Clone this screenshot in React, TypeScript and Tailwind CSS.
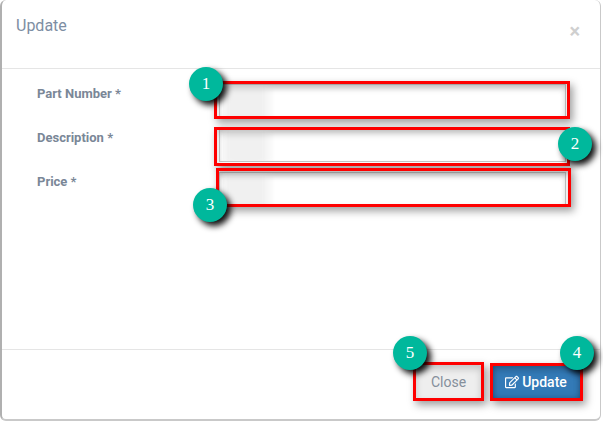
import React from "react"
import { FaRegEdit } from "react-icons/fa"

const redBox = "absolute border-[3px] border-[#fe0000] shadow-[3px_4px_8px_rgba(0,0,0,0.38),inset_0_4px_7px_rgba(0,0,0,0.18)] pointer-events-none"
const badge = "absolute flex h-[34px] w-[34px] items-center justify-center rounded-full bg-[#00b89c] text-[17px] text-white shadow-[4px_4px_6px_rgba(0,0,0,0.95)] font-['Liberation_Serif',serif]"

function Field({ label }: { label: string }) {
  return (
    <div className="flex h-[34px]">
      <label className="w-[203px] pl-[21px] pt-[2px] text-[13px] font-bold leading-[16px] text-[#7a8797]">{label}</label>
      <div className="relative h-[34px] w-[347px] overflow-hidden border border-[#c4c4c4] bg-white shadow-[inset_0_3px_5px_rgba(0,0,0,0.1)]">
        <div className="absolute left-[3px] top-[-6px] h-[calc(100%+12px)] w-[52px] overflow-hidden">
          <div className="h-full w-[46px] bg-[#f0f0f0] blur-[5px]" />
        </div>
      </div>
    </div>
  )
}

export default function App() {
  return (
    <div className="relative h-[422px] w-[603px] overflow-hidden bg-white font-['Roboto',sans-serif]">
      <div className="flex h-[421px] w-[601px] flex-col rounded-[6px] border-b-2 border-l-2 border-r border-[#c9c9c9] border-l-[#b0b0b0] bg-white">
        <div className="flex h-[69px] shrink-0 items-start justify-between border-b border-[#e5e5e5] pl-[14px] pr-[20px] pt-[16px]">
          <h4 className="text-[16px] leading-[20px] text-[#7d8ea3]">Update</h4>
          <span className="mt-[3px] text-[20px] font-bold leading-[24px] text-[#cfcfcf]">×</span>
        </div>
        <div className="flex flex-1 flex-col gap-[10px] pl-[14px] pt-[15px]">
          <Field label="Part Number *" />
          <Field label="Description *" />
          <Field label="Price *" />
        </div>
        <div className="flex h-[70px] shrink-0 justify-end gap-[11px] border-t border-[#e5e5e5] pr-[19px] pt-[15px]">
          <button className="h-[34px] w-[65px] rounded-[3px] bg-[#eeeeee] text-[14px] text-[#858f9b]">Close</button>
          <button className="flex h-[34px] w-[89px] items-center justify-center gap-[3px] rounded-[3px] bg-[#337ab7] pr-[1px] text-[14px] font-medium text-white shadow-[inset_0_0_6px_rgba(20,50,90,0.5)]">
            <FaRegEdit className="h-[14px] w-[14px]" />
            Update
          </button>
        </div>
      </div>

      <div className={`${redBox} left-[214px] top-[81px] h-[38px] w-[356px]`} />
      <div className={`${redBox} left-[214px] top-[127px] h-[39px] w-[356px]`} />
      <div className={`${redBox} left-[216px] top-[168px] h-[39px] w-[355px]`} />
      <div className={`${redBox} left-[413px] top-[362px] h-[39px] w-[71px]`} />
      <div className={`${redBox} left-[490px] top-[363px] h-[38px] w-[93px]`} />

      <div className={`${badge} left-[189px] top-[67px]`}>1</div>
      <div className={`${badge} left-[558px] top-[127px]`}>2</div>
      <div className={`${badge} left-[193px] top-[188px]`}>3</div>
      <div className={`${badge} left-[560px] top-[336px]`}>4</div>
      <div className={`${badge} left-[393px] top-[336px]`}>5</div>
    </div>
  )
}
